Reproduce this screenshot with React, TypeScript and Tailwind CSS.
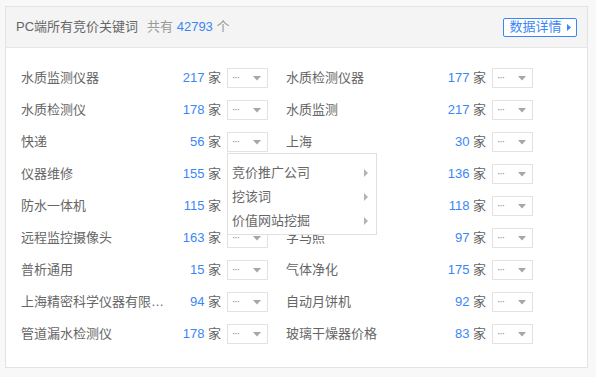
import React from 'react'

interface Keyword {
  word: string
  count: number
}

const ROWS: [Keyword, Keyword][] = [
  [{ word: '水质监测仪器', count: 217 }, { word: '水质检测仪器', count: 177 }],
  [{ word: '水质检测仪', count: 178 }, { word: '水质监测', count: 217 }],
  [{ word: '快递', count: 56 }, { word: '上海', count: 30 }],
  [{ word: '仪器维修', count: 155 }, { word: '水质检测仪', count: 136 }],
  [{ word: '防水一体机', count: 115 }, { word: '仪器仪表', count: 118 }],
  [{ word: '远程监控摄像头', count: 163 }, { word: '字马照', count: 97 }],
  [{ word: '普析通用', count: 15 }, { word: '气体净化', count: 175 }],
  [{ word: '上海精密科学仪器有限公司', count: 94 }, { word: '自动月饼机', count: 92 }],
  [{ word: '管道漏水检测仪', count: 178 }, { word: '玻璃干燥器价格', count: 83 }],
]

const MENU = ['竞价推广公司', '挖该词', '价值网站挖掘']

function Caret() {
  return (
    <svg width="8" height="5" viewBox="0 0 8 5">
      <path d="M0 0 L8 0 L4 4.5 Z" fill="#a6a6a6" />
    </svg>
  )
}

function SubArrow() {
  return (
    <svg width="4" height="8" viewBox="0 0 4 8">
      <path d="M0 0 L4 4 L0 8 Z" fill="#b3b3b3" />
    </svg>
  )
}

function MoreSelect({ open }: { open?: boolean }) {
  return (
    <div className="relative shrink-0">
      <div className="flex h-[20px] w-[41px] items-center justify-between border border-[#e2e2e2] bg-white pl-[4px] pr-[6px]">
        <span className="text-[10px] leading-none tracking-[-1px] text-[#888]">···</span>
        <Caret />
      </div>
      {open && (
        <div className="absolute left-0 top-[21px] z-10 w-[150px] border border-[#e0e0e0] bg-white pb-[1px] pt-[7px]">
          {MENU.map(m => (
            <div key={m} className="flex h-[24px] items-center justify-between pl-[4px] pr-[8px]">
              <span className="text-[13px] text-[#666]">{m}</span>
              <SubArrow />
            </div>
          ))}
        </div>
      )}
    </div>
  )
}

function Item({ k, open }: { k: Keyword; open?: boolean }) {
  return (
    <div className="flex h-[32px] w-[247px] items-center">
      <span className="min-w-0 max-w-[145px] truncate text-[13px] text-[#666]">{k.word}</span>
      <span className="ml-auto shrink-0 pl-[6px] text-[13px]">
        <span className="text-[#3a86f6]">{k.count}</span>
        <span className="text-[#666]"> 家</span>
      </span>
      <div className="ml-[6px]">
        <MoreSelect open={open} />
      </div>
    </div>
  )
}

export default function App() {
  return (
    <div
      className="h-[377px] w-[596px] bg-[#f8f8f8] pl-[5px] pt-[6px]"
      style={{ fontFamily: '"Liberation Sans", "Noto Sans CJK SC", sans-serif' }}
    >
      <div className="h-[362px] w-[583px] border border-[#e3e3e3] bg-white">
        {/* Header */}
        <div className="flex h-[41px] items-center justify-between border-b border-[#e6e6e6] bg-[#f4f4f4] pl-[10px] pr-[10px]">
          <div className="text-[13px]">
            <span className="text-[#666]">PC端所有竞价关键词</span>
            <span className="ml-[9px] text-[#999]">共有 </span>
            <span className="text-[#3a86f6]">42793</span>
            <span className="text-[#999]"> 个</span>
          </div>
          <button className="flex h-[19px] w-[74px] items-center justify-center gap-[5px] rounded-[2px] border border-[#3a86f6] bg-white text-[13px] text-[#3a86f6]">
            数据详情
            <svg width="4" height="7" viewBox="0 0 4 7">
              <path d="M0 0 L4 3.5 L0 7 Z" fill="#3a86f6" />
            </svg>
          </button>
        </div>

        {/* Keyword grid */}
        <div className="pl-[15px] pt-[14px]">
          {ROWS.map(([l, r], i) => (
            <div key={i} className={'flex gap-[18px] ' + (i === 2 ? 'relative z-10' : '')}>
              <Item k={l} open={i === 2} />
              <Item k={r} />
            </div>
          ))}
        </div>
      </div>
    </div>
  )
}
